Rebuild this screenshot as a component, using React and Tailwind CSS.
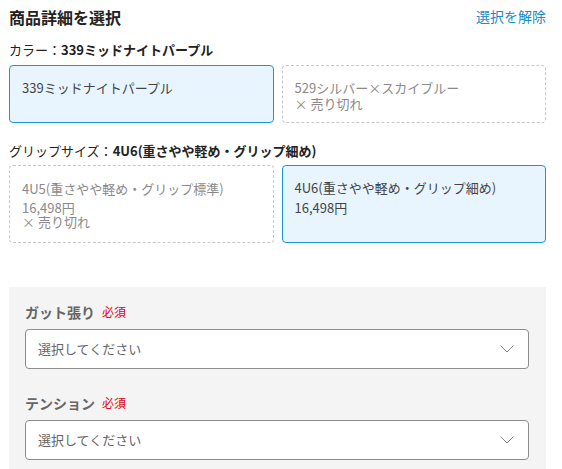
import React from "react";

const font = { fontFamily: '"Noto Sans CJK JP", "Noto Sans", sans-serif' };

function Chevron() {
  return (
    <svg width="14" height="8" viewBox="0 0 14 8" fill="none" className="shrink-0">
      <polyline points="0.5,0.5 7,7 13.5,0.5" stroke="#8a8a8a" strokeWidth="1" />
    </svg>
  );
}

function SelectBox({ label }) {
  return (
    <div>
      <div className="flex items-center gap-[7px] leading-[20px]">
        <span className="text-[14px] font-bold text-[#666]">{label}</span>
        <span className="text-[12px] text-[#e60012]">必須</span>
      </div>
      <div className="mt-[7px] flex h-[40px] items-center justify-between rounded-[4px] border border-[#8c8c8c] bg-white pl-[12px] pr-[14px]">
        <span className="text-[13px] text-[#666]">選択してください</span>
        <Chevron />
      </div>
    </div>
  );
}

export default function App() {
  return (
    <div className="min-h-[469px] bg-white pl-[9px] pr-[16px] pt-[5px] text-[#333]" style={font}>
      <div className="flex items-center justify-between leading-[24px]">
        <h2 className="text-[16px] font-bold text-[#222]">商品詳細を選択</h2>
        <button className="-mt-[3px] text-[14px] text-[#1a8ac8]">選択を解除</button>
      </div>

      <p className="mt-[11px] text-[13px] leading-[20px] text-[#222]">
        カラー：<span className="font-bold">339ミッドナイトパープル</span>
      </p>
      <div className="mt-[5px] grid grid-cols-2 gap-2">
        <div className="h-[58px] rounded-[4px] border border-[#1a96d8] bg-[#e9f5fe] px-3 pt-[14px] text-[13px] leading-[16px] text-[#444]">
          339ミッドナイトパープル
        </div>
        <div className="h-[58px] rounded-[4px] border border-dashed border-[#c8c8c8] px-3 pt-[14px] text-[13px] leading-[16px] text-[#8a8a8a]">
          <div>529シルバー×スカイブルー</div>
          <div>× 売り切れ</div>
        </div>
      </div>

      <p className="mt-[18px] text-[13px] leading-[20px] text-[#222]">
        グリップサイズ：<span className="font-bold">4U6(重さやや軽め・グリップ細め)</span>
      </p>
      <div className="mt-[4px] grid grid-cols-2 gap-2">
        <div className="h-[78px] rounded-[4px] border border-dashed border-[#c8c8c8] px-3 pt-[15px] text-[13px] text-[#8a8a8a]">
          <div className="leading-[16px]">4U5(重さやや軽め・グリップ標準)</div>
          <div className="mt-[4px] leading-[14px]">16,498円</div>
          <div className="leading-[14px]">× 売り切れ</div>
        </div>
        <div className="h-[78px] rounded-[4px] border border-[#1a96d8] bg-[#e9f5fe] px-3 pt-[14px] text-[13px] text-[#444]">
          <div className="leading-[16px]">4U6(重さやや軽め・グリップ細め)</div>
          <div className="mt-[4px] leading-[16px]">16,498円</div>
        </div>
      </div>

      <div className="mt-[44px] flex flex-col gap-[24px] bg-[#f4f4f4] pb-[10px] pl-[16px] pr-[17px] pt-[15px]">
        <SelectBox label="ガット張り" />
        <SelectBox label="テンション" />
      </div>
    </div>
  );
}
